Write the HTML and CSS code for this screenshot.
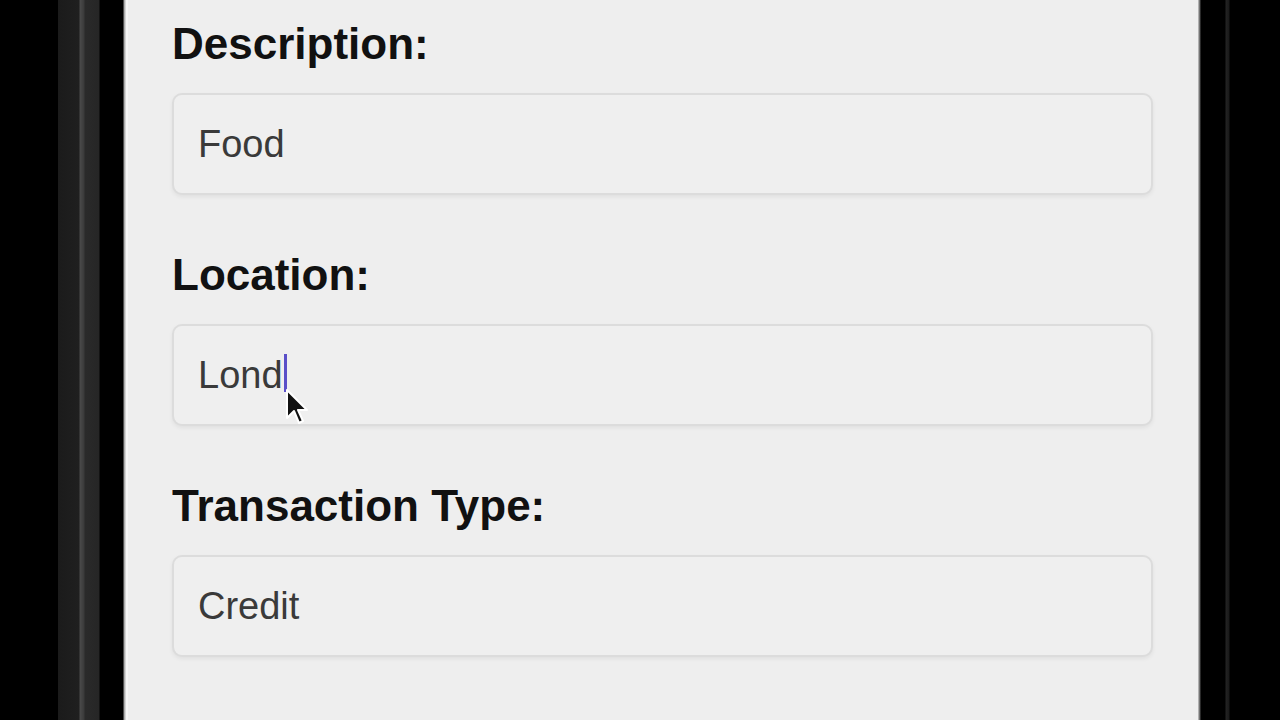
FILE: index.html
```html
<!DOCTYPE html>
<html lang="en">
<head>
    <meta charset="UTF-8">
    <meta name="viewport" content="width=device-width, initial-scale=1.0">
    <title>Add Transaction</title>
    <link rel="stylesheet" href="styles.css">
</head>
<body>
    <div class="device">
        <div class="bezel-left"></div>
        <div class="screen">
            <form class="form">
                <div class="group">
                    <label>Description:</label>
                    <div class="field">Food</div>
                </div>
                <div class="group">
                    <label>Location:</label>
                    <div class="field">Lond<span class="caret"></span></div>
                </div>
                <div class="group">
                    <label>Transaction Type:</label>
                    <div class="field">Credit</div>
                </div>
                <div class="group">
                    <label>Category:</label>
                    <div class="field"></div>
                </div>
            </form>
        </div>
        <div class="bezel-right"></div>
    </div>

    <svg class="pointer" width="26" height="40" viewBox="0 0 26 40">
        <path d="M2 2 L2 30 L9 23 L14 35 L18 33 L13 22 L22 22 Z" fill="#111" stroke="#fff" stroke-width="2" stroke-linejoin="round"/>
    </svg>
</body>
</html>
```

FILE: styles.css
```css
body {
    margin: 0;
    background-color: #000;
    font-family: "Liberation Sans", Arial, sans-serif;
    height: 720px;
    overflow: hidden;
}
.device {
    display: flex;
    height: 720px;
}
.bezel-left {
    width: 126px;
    flex-shrink: 0;
    background: linear-gradient(to right,
        #000 0, #000 58px,
        #1b1b1b 58px, #1f1f1f 79px,
        #4a4a4a 80px, #3a3a3a 84px,
        #2a2a2a 85px, #262626 99px,
        #000 100px, #000 123px,
        #9a9a9a 124px, #e8e8e8 126px);
}
.screen {
    width: 1072px;
    flex-shrink: 0;
    background-color: #eeeeee;
    border-left: 2px solid #f6f6f6;
    box-sizing: border-box;
    padding: 19px 45px 0 44px;
}
.bezel-right {
    flex: 1;
    background: linear-gradient(to right,
        #cfcfcf 0, #555 2px,
        #000 3px, #000 27px,
        #232323 28px, #1a1a1a 31px,
        #000 32px, #000 100%);
}
.group {
    margin-bottom: 55px;
}
.group label {
    display: block;
    font-size: 44px;
    line-height: 50px;
    font-weight: bold;
    color: #111;
    margin-bottom: 24px;
}
.field {
    height: 102px;
    box-sizing: border-box;
    border: 2px solid #dcdcdc;
    border-radius: 10px;
    background-color: #efefef;
    box-shadow: 0 2px 4px rgba(0, 0, 0, 0.06);
    padding: 0 24px;
    display: flex;
    align-items: center;
    font-size: 38px;
    color: #3a3a3a;
}
.caret {
    display: inline-block;
    width: 3px;
    height: 38px;
    margin-left: 1px;
    margin-top: -4px;
    background-color: #5a4fc8;
}
.pointer {
    position: absolute;
    left: 285px;
    top: 388px;
}
```
